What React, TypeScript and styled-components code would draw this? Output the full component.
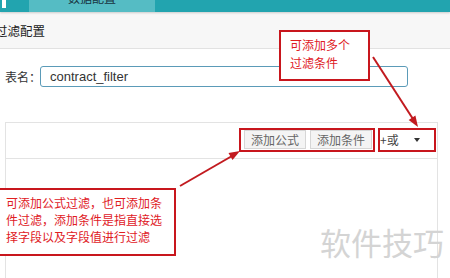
import React from "react";
import styled, { createGlobalStyle } from "styled-components";

const RED = "#c8161d";

const GlobalStyle = createGlobalStyle`
  html, body {
    margin: 0;
    padding: 0;
    background: #fff;
  }
  body {
    font-family: "Liberation Sans", "Noto Sans CJK SC", sans-serif;
  }
`;

const Page = styled.div`
  position: relative;
  width: 450px;
  height: 278px;
  overflow: hidden;
  background: #fff;
`;

const TopBar = styled.div`
  position: relative;
  z-index: 1;
  display: flex;
  height: 12px;
  background: #22a4af;
  box-shadow: 0 1px 2px rgba(0, 0, 0, 0.18);
  .logo {
    width: 4px;
    height: 8px;
    margin-left: 2px;
    background: #fff;
  }
`;

const Tab = styled.div`
  width: 126px;
  margin-left: 23px;
  background: #55bcc4;
  overflow: hidden;
  text-align: center;
  span {
    display: block;
    margin-top: -9px;
    font-family: "Noto Sans CJK SC", sans-serif;
    font-size: 12px;
    line-height: 14px;
    color: #18333f;
  }
`;

const SectionHeader = styled.div`
  display: flex;
  align-items: center;
  height: 36px;
  background: #f7f7f7;
  border-bottom: 1px solid #e2e2e2;
  font-family: "Noto Sans CJK SC", sans-serif;
  font-size: 12.5px;
  color: #222;
  text-indent: -5px;
`;

const FormRow = styled.div`
  display: flex;
  align-items: center;
  height: 21px;
  margin-top: 17px;
  padding-left: 5px;
  label {
    flex-shrink: 0;
    width: 35px;
    white-space: nowrap;
    font-family: "Noto Sans CJK SC", sans-serif;
    font-size: 12px;
    color: #333;
  }
`;

const TextInput = styled.input`
  box-sizing: border-box;
  flex-shrink: 0;
  width: 368px;
  height: 21px;
  padding: 0 0 0 9px;
  border: 1px solid #5b9bb8;
  border-radius: 3px;
  font-family: "Liberation Sans", sans-serif;
  font-size: 13px;
  color: #333;
  outline: none;
`;

const Panel = styled.div`
  height: 170px;
  margin: 35px 12px 0 5px;
  border: 1px solid #e3e3e3;
  border-bottom: none;
`;

const Toolbar = styled.div`
  display: flex;
  justify-content: flex-end;
  align-items: center;
  height: 36px;
  padding: 0 3px 2px 0;
  box-sizing: border-box;
  border-bottom: 1px solid #e3e3e3;
`;

const ButtonGroup = styled.div`
  display: flex;
  gap: 4px;
`;

const ToolButton = styled.button`
  height: 19px;
  padding: 0 6px;
  background: #f4f4f4;
  border: 1px solid #d6d6d6;
  font-family: "Noto Sans CJK SC", sans-serif;
  font-size: 12px;
  line-height: 17px;
  color: #666;
`;

const Select = styled.div`
  display: flex;
  justify-content: space-between;
  align-items: center;
  width: 54px;
  height: 19px;
  margin-left: 8px;
  font-family: "Noto Sans CJK SC", sans-serif;
  font-size: 12px;
  color: #444;
  .caret {
    width: 0;
    height: 0;
    margin-right: 14px;
    border-left: 3px solid transparent;
    border-right: 3px solid transparent;
    border-top: 4px solid #333;
  }
`;

const Highlight = styled.div<{ $x: number; $y: number; $w: number; $h: number }>`
  position: absolute;
  left: ${(p) => p.$x}px;
  top: ${(p) => p.$y}px;
  width: ${(p) => p.$w}px;
  height: ${(p) => p.$h}px;
  box-sizing: border-box;
  border: 2px solid ${RED};
`;

const Callout = styled.div<{ $x: number; $y: number; $w: number; $h: number; $lh: number }>`
  position: absolute;
  left: ${(p) => p.$x}px;
  top: ${(p) => p.$y}px;
  width: ${(p) => p.$w}px;
  height: ${(p) => p.$h}px;
  box-sizing: border-box;
  padding: 4px 0 0 ${(p) => (p.$x < 0 ? 6 : 9)}px;
  border: 2px solid ${RED};
  background: #fff;
  font-family: "Noto Sans CJK SC", sans-serif;
  font-size: 12px;
  line-height: ${(p) => p.$lh}px;
  color: #e0201f;
  white-space: nowrap;
  span {
    display: block;
  }
`;

const Watermark = styled.div`
  position: absolute;
  left: 320px;
  top: 226px;
  font-family: "Noto Sans CJK SC", sans-serif;
  font-size: 31px;
  line-height: 31px;
  color: #d4d4d4;
`;

const Arrows = styled.svg`
  position: absolute;
  left: 0;
  top: 0;
  pointer-events: none;
`;

export default function App() {
  return (
    <Page>
      <GlobalStyle />
      <TopBar>
        <div className="logo" />
        <Tab>
          <span>数据配置</span>
        </Tab>
      </TopBar>
      <SectionHeader>过滤配置</SectionHeader>
      <FormRow>
        <label>表名：</label>
        <TextInput readOnly defaultValue="contract_filter" />
      </FormRow>
      <Panel>
        <Toolbar>
          <ButtonGroup>
            <ToolButton>添加公式</ToolButton>
            <ToolButton>添加条件</ToolButton>
          </ButtonGroup>
          <Select>
            <span>+或</span>
            <i className="caret" />
          </Select>
        </Toolbar>
      </Panel>

      <Highlight $x={239} $y={128} $w={136} $h={24} />
      <Highlight $x={378} $y={128} $w={58} $h={24} />

      <Callout $x={279} $y={30} $w={91} $h={51} $lh={18}>
        <span>可添加多个</span>
        <span>过滤条件</span>
      </Callout>
      <Callout $x={-2} $y={188} $w={178} $h={68} $lh={17}>
        <span>可添加公式过滤，也可添加条</span>
        <span>件过滤，添加条件是指直接选</span>
        <span>择字段以及字段值进行过滤</span>
      </Callout>

      <Watermark>软件技巧</Watermark>

      <Arrows width="450" height="278" viewBox="0 0 450 278">
        <line x1="373" y1="57" x2="413" y2="119" stroke="#c21a1f" strokeWidth="2" />
        <polygon points="408.7,119.9 415.4,115.6 418,127" fill="#c21a1f" />
        <line x1="180" y1="186" x2="232" y2="156" stroke="#c21a1f" strokeWidth="2" />
        <polygon points="232.5,160 228.5,153.1 240,151" fill="#c21a1f" />
      </Arrows>
    </Page>
  );
}
